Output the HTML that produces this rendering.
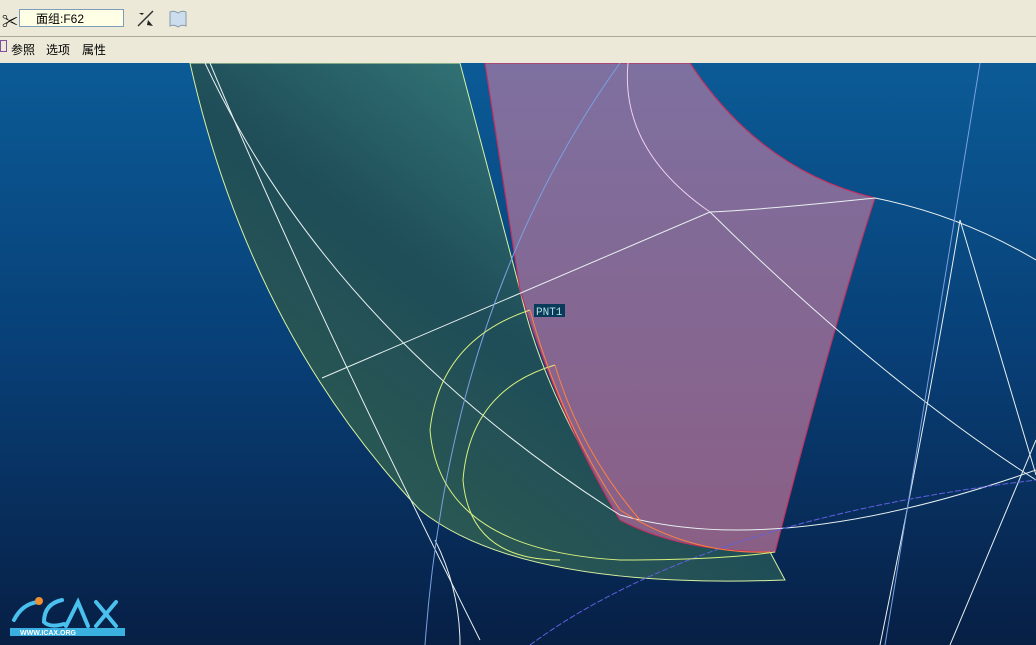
<!DOCTYPE html>
<html><head><meta charset="utf-8"><style>
body{margin:0;width:1036px;height:645px;overflow:hidden;background:#d4d0c8;font-family:"Liberation Sans","Noto Sans CJK SC",sans-serif;}
#tb{position:absolute;left:0;top:0;width:1036px;height:36px;background:#ece9d8;border-bottom:1px solid #aca899;}
#mb{position:absolute;left:0;top:37px;width:1036px;height:26px;background:#ece9d8;font-size:12px;}
#vp{position:absolute;left:0;top:63px;}
</style></head><body>
<div id="tb">
 <div style="position:absolute;left:2px;top:8px;font-size:16px;">✂</div>
 <div style="position:absolute;left:19px;top:9px;width:105px;height:18px;background:#ffffe6;border:1px solid #7f9db9;font-size:12px;line-height:18px;padding-left:16px;box-sizing:border-box;">面组:F62</div>
 <svg style="position:absolute;left:136px;top:9px" width="20" height="20"><line x1="2" y1="17" x2="17" y2="2" stroke="#333" stroke-width="1.5"/><path d="M3 4l5 0l-2 2zM12 11l5 6l-6-1z" fill="#222"/></svg>
 <svg style="position:absolute;left:168px;top:9px" width="20" height="20"><path d="M2 3q4-2 8 1q4-3 8-1v14q-4-2-8 1q-4-3-8-1z" fill="#cde" stroke="#89a"/></svg>
</div>
<div id="mb"><span style="position:absolute;left:0;top:3px;width:5px;height:10px;border:1px solid #8050a0;"></span><span style="position:absolute;left:11px;top:4px">参照</span><span style="position:absolute;left:46px;top:4px">选项</span><span style="position:absolute;left:82px;top:4px">属性</span></div>
<svg id="vp" width="1036" height="582" viewBox="0 63 1036 582">
<defs>
<linearGradient id="bg" x1="0" y1="0" x2="0" y2="1"><stop offset="0" stop-color="#0b5b97"/><stop offset="0.5" stop-color="#083f76"/><stop offset="1" stop-color="#071f45"/></linearGradient>
<linearGradient id="gr" x1="0.9" y1="0" x2="0.2" y2="0.8"><stop offset="0" stop-color="#3f908c"/><stop offset="0.6" stop-color="#1f4d58"/><stop offset="1" stop-color="#2c5a52"/></linearGradient>
<linearGradient id="pk" x1="0" y1="0" x2="0" y2="1"><stop offset="0" stop-color="#7e70a0"/><stop offset="1" stop-color="#8a5f85"/></linearGradient>
</defs>
<rect x="0" y="63" width="1036" height="582" fill="url(#bg)"/>
<path d="M190 63 Q250 330 420 510 Q520 590 785 580 L770 552 Q640 540 600 480 Q540 380 520 290 L460 63 Z" fill="url(#gr)" stroke="#d8f0a0" stroke-width="1"/>
<path d="M485 63 L690 63 Q760 170 875 198 Q835 320 775 552 Q680 552 620 520 Q560 420 520 290 Z" fill="url(#pk)" stroke="#c03060" stroke-width="1.2"/>
<g fill="none" stroke="#e8f0f0" stroke-width="1">
<path d="M210 63 Q300 280 480 640"/>
<path d="M205 63 Q330 330 620 515"/>
<path d="M322 378 L710 212 Q760 210 875 198 Q960 215 1036 260"/>
<path d="M710 212 Q880 380 1036 480"/>
<path d="M620 515 Q780 560 1036 470"/>
<path d="M960 220 L1036 475"/>
<path d="M960 220 Q930 400 880 645"/>
<path d="M1036 440 L950 645"/>
<path d="M435 540 Q 460 590 460 645"/>
</g>
<path d="M628 63 Q620 150 710 212" stroke="#f0d0f0" fill="none"/>
<path d="M980 63 Q940 300 885 645" stroke="#7aa0e0" fill="none"/>
<path d="M620 63 Q450 300 425 645" stroke="#7aa0e0" fill="none"/>
<path d="M530 645 Q700 520 1036 480" stroke="#6060e0" stroke-dasharray="6 2" fill="none"/>
<path d="M530 310 Q440 340 430 430 Q440 550 620 560 Q720 560 775 552" stroke="#d8f080" fill="none"/>
<path d="M555 365 Q470 390 463 480 Q470 560 560 560" stroke="#d8f080" fill="none"/>
<path d="M530 310 Q560 420 620 510 Q690 555 770 552" stroke="#ff8040" fill="none"/>
<path d="M555 365 Q580 450 640 520" stroke="#ff8040" fill="none"/>
<rect x="534" y="304" width="31" height="13" fill="#0a3a5a"/>
<text x="536" y="315" font-family="Liberation Mono,monospace" font-size="11" fill="#b0e0e0">PNT1</text>
<g stroke="#4ac0ee" fill="none" stroke-width="4" stroke-linecap="round">
<path d="M14 620 Q22 604 38 602"/><path d="M62 600 Q44 604 44 622 Q50 628 64 624"/><path d="M66 626 L78 602 L88 626"/><path d="M96 602 L116 626 M116 602 L96 626"/>
</g>
<circle cx="39" cy="601" r="4" fill="#f09030"/>
<rect x="10" y="628" width="115" height="8" fill="#3ab0e0"/>
<text x="20" y="635" font-size="7" font-weight="bold" fill="#fff" font-family="Liberation Sans,sans-serif">WWW.ICAX.ORG</text>
</svg>
</body></html>
